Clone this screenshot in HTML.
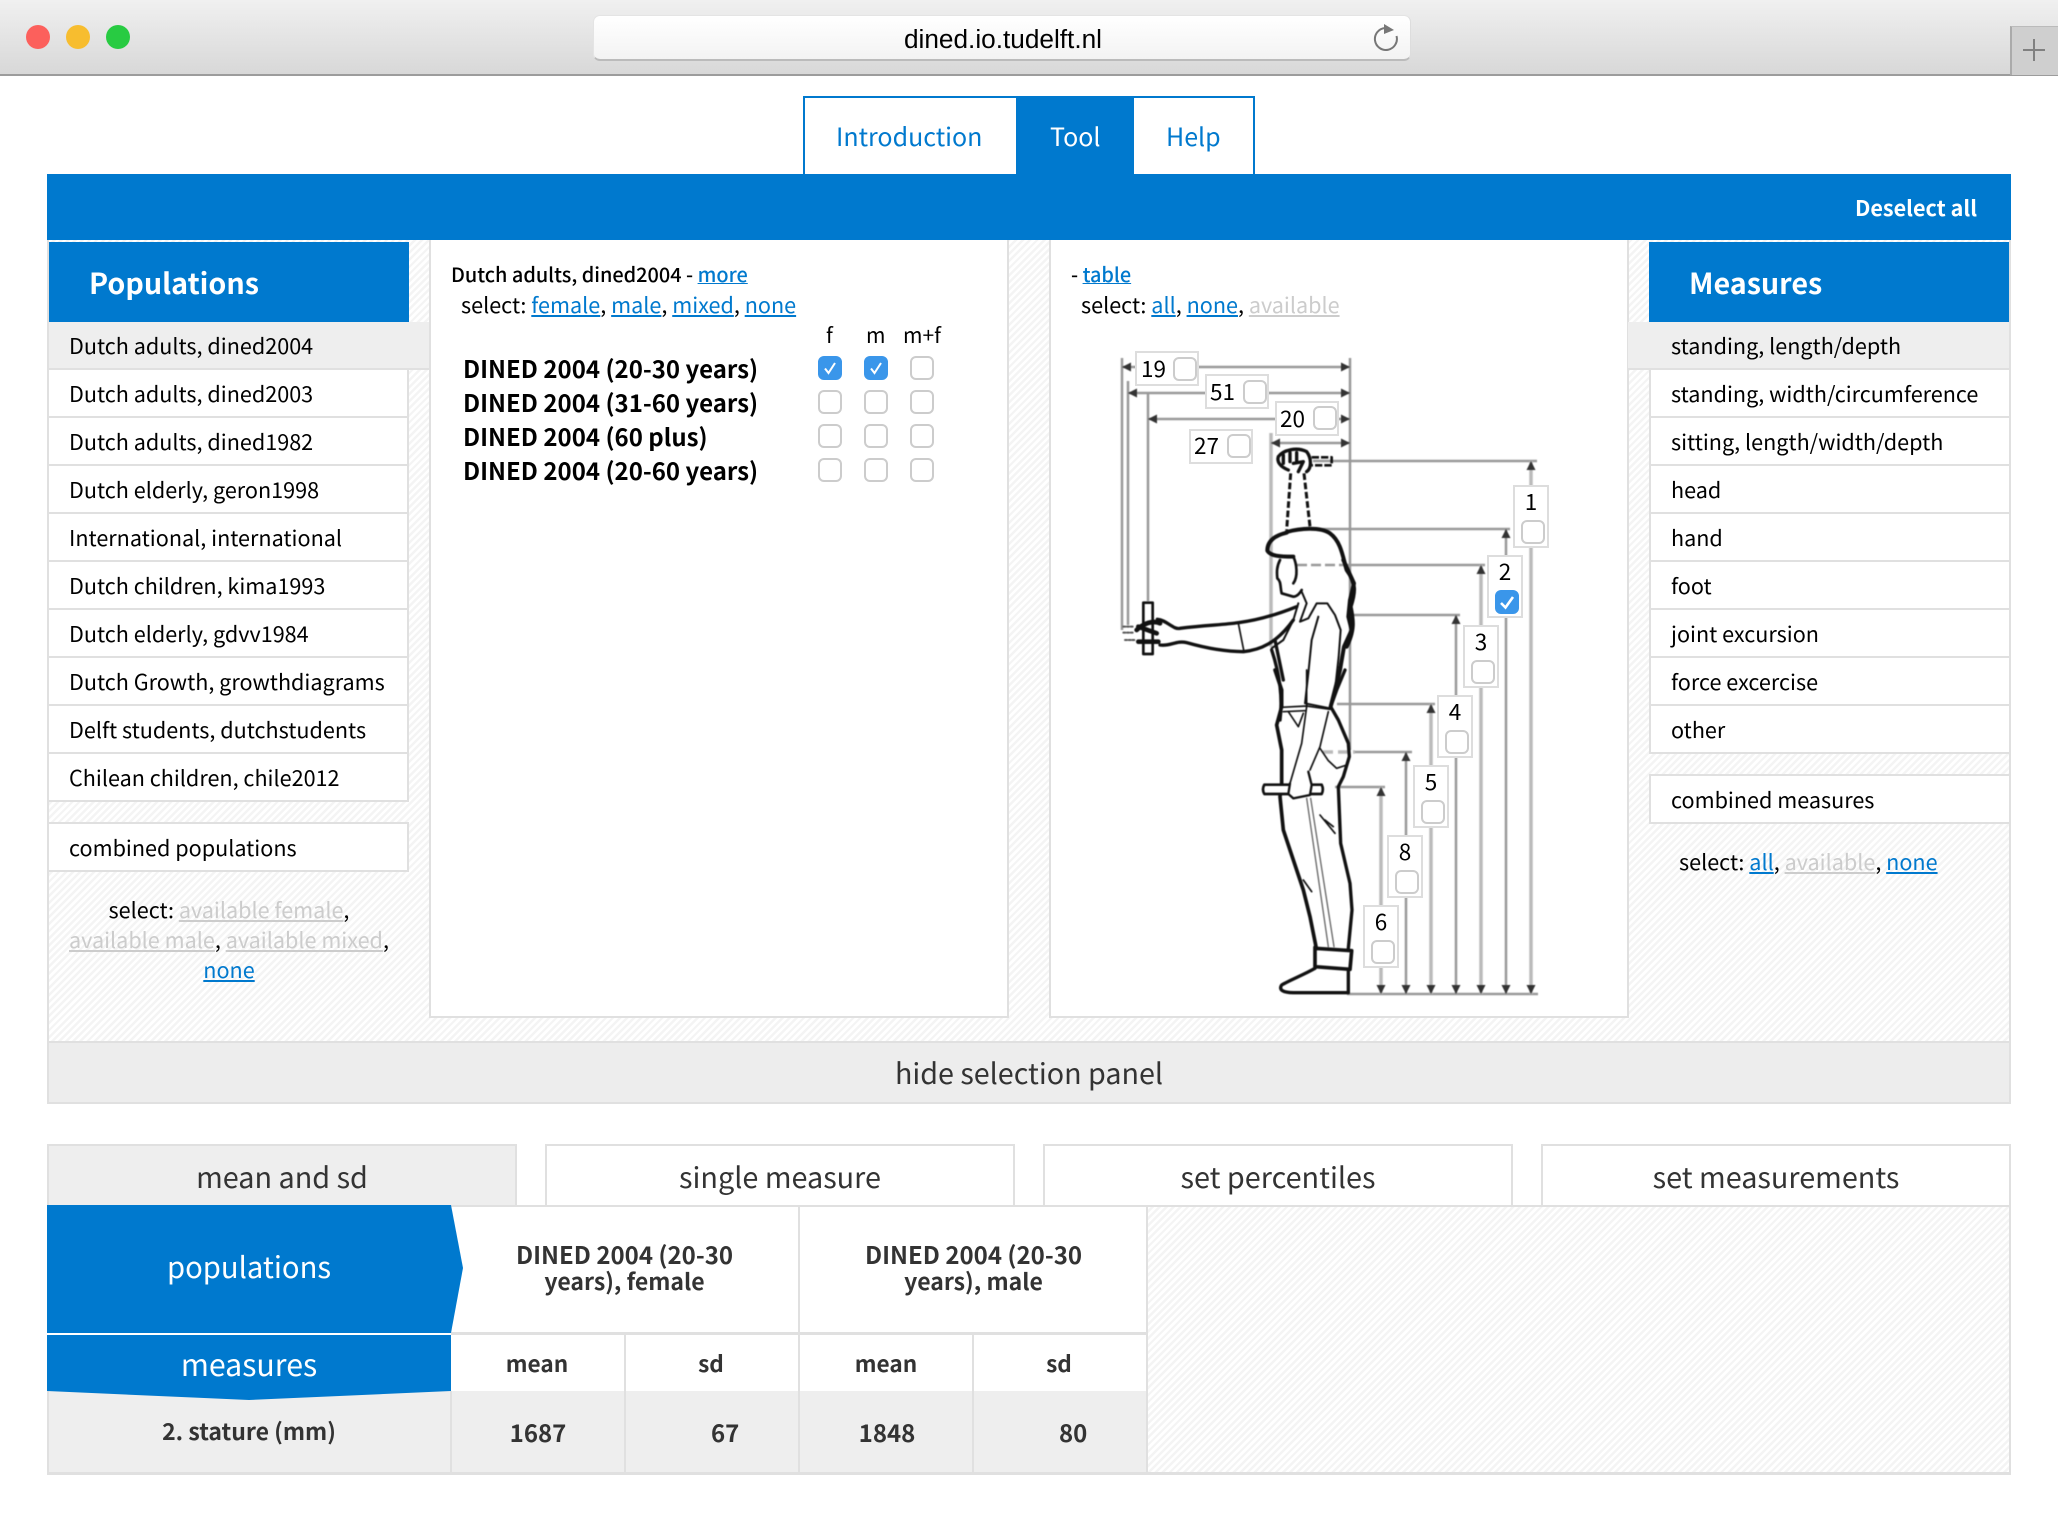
<!DOCTYPE html>
<html><head><meta charset="utf-8"><style>
*{box-sizing:border-box}
html,body{margin:0;padding:0;width:2058px;height:1524px;overflow:hidden;background:#fff}
body{position:relative;font-family:"Noto Sans CJK JP","Liberation Sans",sans-serif;color:#000}
.a,.t{position:absolute}
.t{white-space:nowrap;line-height:30px;height:30px;font-size:21.6px}
.m{margin-top:-1px}
.n{font-size:22.5px;margin-top:-1px}
.r{font-size:24px;margin-top:-1px}
.b{font-weight:700}
a{color:#0079ce;text-decoration:underline}
a.g{color:#ccc}
.hatch{background:repeating-linear-gradient(135deg,#fff 0 2.6px,#f4f4f4 2.6px 5px)}
.li{position:absolute;height:48px;background:#fff;border-bottom:2px solid #e0e0e0;border-right:2px solid #e0e0e0;border-left:2px solid #e0e0e0}
.cb{position:absolute;width:24px;height:24px;border:2px solid #ccc;border-radius:6px;background:#fff}
.cb.on{background:#3a96ea;border-color:#3a96ea}
.cb svg{position:absolute;left:-2px;top:-2px}
.lab{position:absolute;background:#fff;border:2px solid #ddd}
.tab{position:absolute;top:1144px;height:61px;border:2px solid #e0e0e0;border-bottom:none;text-align:center;font-size:28.8px;line-height:61px;color:#333;background:#fff}
.c{text-align:center}
</style></head><body>
<!-- browser chrome -->
<div class="a" style="left:0;top:0;width:2058px;height:76px;background:linear-gradient(#f0f0f0,#d8d8d8);border-bottom:2px solid #9c9c9c"></div>
<div class="a" style="left:26px;top:25px;width:24px;height:24px;border-radius:50%;background:#fc605c"></div>
<div class="a" style="left:66px;top:25px;width:24px;height:24px;border-radius:50%;background:#f7bd2f"></div>
<div class="a" style="left:106px;top:25px;width:24px;height:24px;border-radius:50%;background:#28cb42"></div>
<div class="a" style="left:593px;top:15px;width:818px;height:46px;border-radius:7px;background:linear-gradient(#fff,#f3f3f3);border-bottom:2px solid #bbb;border-top:1px solid #e4e4e4;border-left:1px solid #e4e4e4;border-right:1px solid #ddd"></div>
<div class="t c" style="left:595px;width:816px;top:24px;font:26.2px/30px 'Liberation Sans',sans-serif;height:30px">dined.io.tudelft.nl</div>
<svg class="a" style="left:1370px;top:22px" width="32" height="32" viewBox="0 0 32 32"><path d="M26.5 14A11 11 0 1 1 15 6" fill="none" stroke="#777" stroke-width="2"/><path d="M14 2L24 8L14 12Z" fill="#777"/></svg>
<div class="a" style="left:2010px;top:26px;width:48px;height:49px;background:#cfcfcf;border-left:2px solid #aaa;border-top:1px solid #bbb"></div>
<div class="a" style="left:2023px;top:49px;width:22px;height:2px;background:#808080"></div>
<div class="a" style="left:2033px;top:39px;width:2px;height:22px;background:#808080"></div>

<!-- top tabs -->
<div class="a" style="left:803px;top:96px;width:452px;height:78px;border:2px solid #0079ce;border-bottom:none"></div>
<div class="a" style="left:1016px;top:96px;width:118px;height:78px;background:#0079ce"></div>
<div class="t m" style="left:836px;top:122px;font-size:25px;color:#0079ce">Introduction</div>
<div class="t m" style="left:1050px;top:122px;font-size:25px;color:#fff">Tool</div>
<div class="t m" style="left:1166px;top:122px;font-size:25px;color:#0079ce">Help</div>
<div class="a" style="left:47px;top:174px;width:1964px;height:66px;background:#0079ce"></div>
<div class="t b" style="right:81px;top:193px;color:#fff;font-size:21.6px">Deselect all</div>

<!-- selection panel -->
<div class="a hatch" style="left:47px;top:240px;width:1964px;height:803px;border-left:2px solid #e0e0e0;border-right:2px solid #e0e0e0"></div>
<div class="a" style="left:47px;top:1041px;width:1964px;height:63px;background:#ededed;border:2px solid #e0e0e0"></div>
<div class="t c" style="left:47px;width:1964px;top:1058px;font-size:28.7px;color:#333">hide selection panel</div>

<!-- populations -->
<div class="a" style="left:49px;top:242px;width:360px;height:80px;background:#0079ce"></div>
<div class="t b" style="left:89px;top:268px;color:#fff;font-size:28.7px">Populations</div>
<div class="li" style="left:47px;top:322px;width:383px;background:#eee;border-right:none">  </div>
<div class="li" style="left:47px;top:370px;width:362px"></div>
<div class="li" style="left:47px;top:418px;width:362px"></div>
<div class="li" style="left:47px;top:466px;width:362px"></div>
<div class="li" style="left:47px;top:514px;width:362px"></div>
<div class="li" style="left:47px;top:562px;width:362px"></div>
<div class="li" style="left:47px;top:610px;width:362px"></div>
<div class="li" style="left:47px;top:658px;width:362px"></div>
<div class="li" style="left:47px;top:706px;width:362px"></div>
<div class="li" style="left:47px;top:754px;width:362px"></div>
<div class="t" style="left:69px;top:331px">Dutch adults, dined2004</div>
<div class="t" style="left:69px;top:379px">Dutch adults, dined2003</div>
<div class="t" style="left:69px;top:427px">Dutch adults, dined1982</div>
<div class="t" style="left:69px;top:475px">Dutch elderly, geron1998</div>
<div class="t" style="left:69px;top:523px">International, international</div>
<div class="t" style="left:69px;top:571px">Dutch children, kima1993</div>
<div class="t" style="left:69px;top:619px">Dutch elderly, gdvv1984</div>
<div class="t" style="left:69px;top:667px">Dutch Growth, growthdiagrams</div>
<div class="t" style="left:69px;top:715px">Delft students, dutchstudents</div>
<div class="t" style="left:69px;top:763px">Chilean children, chile2012</div>
<div class="li" style="left:47px;top:822px;width:362px;height:50px;border-top:2px solid #e0e0e0"></div>
<div class="t" style="left:69px;top:833px">combined populations</div>
<div class="t c" style="left:49px;width:360px;top:895px">select: <a class="g">available female</a>,</div>
<div class="t c" style="left:49px;width:360px;top:925px"><a class="g">available male</a>, <a class="g">available mixed</a>,</div>
<div class="t c" style="left:49px;width:360px;top:955px"><a>none</a></div>

<!-- center panel 1 -->
<div class="a" style="left:429px;top:240px;width:580px;height:778px;background:#fff;border:2px solid #e0e0e0;border-top:none"></div>
<div class="t m" style="left:451px;top:260px;font-size:19.9px;font-weight:500">Dutch adults, dined2004 - <a>more</a></div>
<div class="t" style="left:461px;top:290px">select: <a>female</a>, <a>male</a>, <a>mixed</a>, <a>none</a></div>
<div class="t" style="left:826px;top:320px;font-size:21px">f</div>
<div class="t" style="left:866px;top:320px;font-size:21px">m</div>
<div class="t" style="left:903px;top:320px;font-size:21px">m+f</div>
<div class="t b r" style="left:463px;top:354px">DINED 2004 (20-30 years)</div>
<div class="t b r" style="left:463px;top:388px">DINED 2004 (31-60 years)</div>
<div class="t b r" style="left:463px;top:422px">DINED 2004 (60 plus)</div>
<div class="t b r" style="left:463px;top:456px">DINED 2004 (20-60 years)</div>
<div class="cb on" style="left:818px;top:356px"><svg width="24" height="24"><path d="M7 12.5L10.5 17L17 7" fill="none" stroke="#fff" stroke-width="2"/></svg></div>
<div class="cb on" style="left:864px;top:356px"><svg width="24" height="24"><path d="M7 12.5L10.5 17L17 7" fill="none" stroke="#fff" stroke-width="2"/></svg></div>
<div class="cb" style="left:910px;top:356px"></div>
<div class="cb" style="left:818px;top:390px"></div><div class="cb" style="left:864px;top:390px"></div><div class="cb" style="left:910px;top:390px"></div>
<div class="cb" style="left:818px;top:424px"></div><div class="cb" style="left:864px;top:424px"></div><div class="cb" style="left:910px;top:424px"></div>
<div class="cb" style="left:818px;top:458px"></div><div class="cb" style="left:864px;top:458px"></div><div class="cb" style="left:910px;top:458px"></div>

<!-- center panel 2 -->
<div class="a" style="left:1049px;top:240px;width:580px;height:778px;background:#fff;border:2px solid #e0e0e0;border-top:none"></div>
<div class="t m" style="left:1071px;top:260px;font-size:19.9px;font-weight:500">- <a>table</a></div>
<div class="t" style="left:1081px;top:290px">select: <a>all</a>, <a>none</a>, <a class="g">available</a></div>

<!-- figure -->
<svg class="a" style="left:0;top:0;filter:blur(.6px)" width="2058" height="1524" viewBox="0 0 2058 1524">
<defs>
<marker id="m" markerUnits="userSpaceOnUse" markerWidth="11" markerHeight="11" refX="10" refY="5.5" orient="auto-start-reverse"><path d="M1 1L10 5.5L1 10Z" fill="#333"/></marker>
</defs>
<g fill="none" stroke="#999" stroke-width="2.5">
<path d="M1122 358V630M1128 381V625M1148 393V601" />
<path d="M1271 433V647" stroke="#bbb" stroke-width="3.5"/>
<path d="M1350 358V750"/>
<path d="M1122 367H1350" marker-start="url(#m)" marker-end="url(#m)"/>
<path d="M1128 393H1350" marker-start="url(#m)" marker-end="url(#m)"/>
<path d="M1148 419H1350" marker-start="url(#m)" marker-end="url(#m)"/>
<path d="M1271 443H1350" marker-start="url(#m)" marker-end="url(#m)"/>
<path d="M1313 461H1537M1320 529H1510M1350 565H1485M1350 615H1460M1337 704H1435M1355 752H1412M1335 787H1385M1347 994H1538"/>
<path d="M1297 565H1350" stroke-dasharray="10 4"/>
<path d="M1323 752H1355" stroke="#bbb" stroke-width="3.5" stroke-dasharray="10 5"/>
<path d="M1531 461V994" stroke="#bbb" stroke-width="3.5" marker-start="url(#m)" marker-end="url(#m)"/>
<path d="M1506 529V994" marker-start="url(#m)" marker-end="url(#m)"/>
<path d="M1481 565V994" stroke="#bbb" stroke-width="3.5" marker-start="url(#m)" marker-end="url(#m)"/>
<path d="M1456 615V994" marker-start="url(#m)" marker-end="url(#m)"/>
<path d="M1431 704V994" stroke="#bbb" stroke-width="3.5" marker-start="url(#m)" marker-end="url(#m)"/>
<path d="M1406 752V994" marker-start="url(#m)" marker-end="url(#m)"/>
<path d="M1381 787V994" stroke="#bbb" stroke-width="3.5" marker-start="url(#m)" marker-end="url(#m)"/>
</g>
<!-- figure top part, zoom 3 coords -->
<g transform="translate(1080 330) scale(.33333)" fill="none" stroke="#111" stroke-linejoin="round" stroke-linecap="round">
<path d="M625 420C600 410 590 395 595 380C610 360 650 350 680 365C695 385 695 415 680 425M610 375V400M630 368V395M650 368V395M640 400L670 395L655 425" stroke-width="10"/>
<path d="M695 382H755V406H695" stroke-width="8" stroke-dasharray="22 6" stroke-linecap="butt"/>
<path d="M632 430L620 600M672 430L690 590" stroke-width="9" stroke-dasharray="20 8" stroke-linecap="butt"/>
<path d="M620 606C660 595 720 590 750 610C785 635 790 690 800 720C830 760 825 790 812 830C820 870 825 900 800 950" stroke-width="12"/>
<path d="M620 608C590 615 562 630 562 662C570 678 600 680 640 680" stroke-width="12"/>
<path d="M600 690C590 710 590 725 592 745C604 755 600 770 605 790L640 800C650 800 660 790 665 780M640 680C650 700 655 740 640 760" stroke-width="8"/>
<path d="M232 868C260 870 280 900 300 895C380 885 430 885 475 878C540 870 600 850 650 830" stroke-width="10"/>
<path d="M240 945C270 950 290 930 320 938C380 955 440 965 490 965C540 960 590 940 640 870" stroke-width="10"/>
<path d="M475 880L492 965" stroke-width="5"/>
<path d="M190 818H218V972H190Z" stroke-width="8" fill="#fff"/>
<path d="M170 900C190 880 220 870 240 880M175 935H235M175 890L230 910" stroke-width="14"/>
<path d="M130 890H160M130 908H160M135 930H165" stroke-width="6" stroke-dasharray="6 5" stroke="#555"/>
<path d="M585 930L610 1050" stroke-width="10"/>
</g>
<!-- figure mid part, zoom 7 coords -->
<g transform="translate(1240 560) scale(.33333)" fill="none" stroke="#111" stroke-linejoin="round" stroke-linecap="round">
<path d="M95 270C115 330 130 400 120 480" stroke-width="10"/>
<path d="M185 95L200 130L180 185L205 175L230 130L262 130L285 165L302 210L296 290L285 390L270 440" stroke-width="6"/>
<path d="M235 170L215 240L205 340L195 430L270 445" stroke-width="6"/>
<path d="M175 130L160 180L130 240L95 265" stroke-width="6"/>
<path d="M310 0L342 70L330 120L325 170L335 210L312 260L300 330L272 440" stroke-width="12"/>
</g>
<!-- figure bottom part, zoom 4 coords -->
<g transform="translate(1080 670) scale(.33333)" fill="none" stroke="#111" stroke-linejoin="round" stroke-linecap="round">
<path d="M585 0L605 60L605 110L590 165L605 240L605 340L600 380L610 480L640 570L670 660L690 740L708 830" stroke-width="11"/>
<path d="M795 0L770 60L752 110L775 150L805 220L808 260L790 320L775 350L782 520L810 640L816 720L805 835" stroke-width="10"/>
<path d="M605 112L680 108L750 118M610 125L675 122" stroke-width="5"/>
<path d="M680 0L680 110L665 220L630 340M690 300L720 230L745 125" stroke-width="5"/>
<path d="M553 344H725Q732 358 725 372H553Q545 358 553 344Z" stroke-width="8" fill="#fff"/>
<path d="M630 340L625 372L640 385L690 375L695 345L685 305" stroke-width="7" fill="#fff"/>
<path d="M680 385L745 830M692 385L762 830" stroke-width="4" stroke="#666"/>
<path d="M720 235L745 272L770 295L800 285" stroke-width="5"/>
<path d="M625 125L655 170L670 130" stroke-width="5"/>
<path d="M720 435L765 490M735 450L760 470M670 630L695 665" stroke-width="5"/>
<path d="M705 832V890L810 898L815 842L705 835" stroke-width="11"/>
<path d="M705 895C670 915 630 930 605 945C595 960 610 968 640 968H805V905" stroke-width="10"/>
</g>
</svg>
<div class="lab" style="left:1135px;top:351px;width:64px;height:35px"></div>
<div class="lab" style="left:1205px;top:374px;width:64px;height:35px"></div>
<div class="lab" style="left:1275px;top:401px;width:64px;height:35px"></div>
<div class="lab" style="left:1189px;top:429px;width:64px;height:35px"></div>
<div class="lab" style="left:1513px;top:485px;width:36px;height:63px"></div>
<div class="lab" style="left:1487px;top:555px;width:36px;height:63px"></div>
<div class="lab" style="left:1463px;top:625px;width:36px;height:63px"></div>
<div class="lab" style="left:1437px;top:695px;width:36px;height:63px"></div>
<div class="lab" style="left:1413px;top:765px;width:36px;height:63px"></div>
<div class="lab" style="left:1387px;top:835px;width:36px;height:63px"></div>
<div class="lab" style="left:1363px;top:905px;width:36px;height:63px"></div>
<div class="t n" style="left:1141px;top:354px">19</div>
<div class="t n" style="left:1210px;top:377px">51</div>
<div class="t n" style="left:1280px;top:404px">20</div>
<div class="t n" style="left:1194px;top:431px">27</div>
<div class="t c n" style="left:1513px;width:36px;top:487px">1</div>
<div class="t c n" style="left:1487px;width:36px;top:557px">2</div>
<div class="t c n" style="left:1463px;width:36px;top:627px">3</div>
<div class="t c n" style="left:1437px;width:36px;top:697px">4</div>
<div class="t c n" style="left:1413px;width:36px;top:767px">5</div>
<div class="t c n" style="left:1387px;width:36px;top:837px">8</div>
<div class="t c n" style="left:1363px;width:36px;top:907px">6</div>
<div class="cb" style="left:1173px;top:357px"></div>
<div class="cb" style="left:1243px;top:380px"></div>
<div class="cb" style="left:1313px;top:406px"></div>
<div class="cb" style="left:1227px;top:434px"></div>
<div class="cb" style="left:1521px;top:520px"></div>
<div class="cb on" style="left:1495px;top:590px"><svg width="24" height="24"><path d="M6 13L10.5 17.5L18 7" fill="none" stroke="#fff" stroke-width="2.6"/></svg></div>
<div class="cb" style="left:1471px;top:660px"></div>
<div class="cb" style="left:1445px;top:730px"></div>
<div class="cb" style="left:1421px;top:800px"></div>
<div class="cb" style="left:1395px;top:870px"></div>
<div class="cb" style="left:1371px;top:940px"></div>

<!-- measures -->
<div class="a" style="left:1649px;top:242px;width:360px;height:80px;background:#0079ce"></div>
<div class="t b" style="left:1689px;top:268px;color:#fff;font-size:28.7px">Measures</div>
<div class="li" style="left:1628px;top:322px;width:383px;background:#eee;border-left:none"></div>
<div class="li" style="left:1649px;top:370px;width:362px"></div>
<div class="li" style="left:1649px;top:418px;width:362px"></div>
<div class="li" style="left:1649px;top:466px;width:362px"></div>
<div class="li" style="left:1649px;top:514px;width:362px"></div>
<div class="li" style="left:1649px;top:562px;width:362px"></div>
<div class="li" style="left:1649px;top:610px;width:362px"></div>
<div class="li" style="left:1649px;top:658px;width:362px"></div>
<div class="li" style="left:1649px;top:706px;width:362px"></div>
<div class="t" style="left:1671px;top:331px">standing, length/depth</div>
<div class="t" style="left:1671px;top:379px">standing, width/circumference</div>
<div class="t" style="left:1671px;top:427px">sitting, length/width/depth</div>
<div class="t" style="left:1671px;top:475px">head</div>
<div class="t" style="left:1671px;top:523px">hand</div>
<div class="t" style="left:1671px;top:571px">foot</div>
<div class="t" style="left:1671px;top:619px">joint excursion</div>
<div class="t" style="left:1671px;top:667px">force excercise</div>
<div class="t" style="left:1671px;top:715px">other</div>
<div class="li" style="left:1649px;top:774px;width:362px;height:50px;border-top:2px solid #e0e0e0"></div>
<div class="t" style="left:1671px;top:785px">combined measures</div>
<div class="t" style="left:1679px;top:847px">select: <a>all</a>, <a class="g">available</a>, <a>none</a></div>

<!-- bottom tabs -->
<div class="tab" style="left:47px;width:470px;background:#eee">mean and sd</div>
<div class="tab" style="left:545px;width:470px">single measure</div>
<div class="tab" style="left:1043px;width:470px">set percentiles</div>
<div class="tab" style="left:1541px;width:470px">set measurements</div>

<!-- table -->
<div class="a hatch" style="left:1147px;top:1205px;width:864px;height:270px;border-top:2px solid #e0e0e0;border-right:2px solid #e0e0e0;border-bottom:3px solid #e0e0e0"></div>
<div class="a" style="left:451px;top:1205px;width:697px;height:130px;background:#fff;border-top:2px solid #e0e0e0;border-bottom:3px solid #e0e0e0;border-right:2px solid #e0e0e0"></div>
<div class="a" style="left:47px;top:1391px;width:1101px;height:84px;background:#eee;border-bottom:3px solid #e0e0e0;border-left:2px solid #e0e0e0"></div>
<div class="a" style="left:450px;top:1391px;width:2px;height:82px;background:#e0e0e0"></div>
<div class="a" style="left:624px;top:1335px;width:2px;height:138px;background:#e0e0e0"></div>
<div class="a" style="left:798px;top:1205px;width:2px;height:268px;background:#e0e0e0"></div>
<div class="a" style="left:972px;top:1335px;width:2px;height:138px;background:#e0e0e0"></div>
<div class="a" style="left:1146px;top:1205px;width:2px;height:268px;background:#e0e0e0"></div>
<svg class="a" style="left:0;top:0" width="500" height="1524" viewBox="0 0 500 1524"><path d="M47 1205H451L463 1268L451 1333H47Z" fill="#0079ce"/><path d="M47 1335H451V1391L249 1400L47 1391Z" fill="#0079ce"/></svg>
<div class="t c m" style="left:47px;width:404px;top:1252px;color:#fff;font-size:29.2px">populations</div>
<div class="t c m" style="left:47px;width:404px;top:1349px;color:#fff;font-size:30.3px">measures</div>
<div class="t c b r" style="left:451px;width:347px;top:1240px;color:#333">DINED 2004 (20-30</div>
<div class="t c b m" style="left:451px;width:347px;top:1266px;color:#333;font-size:23px">years), female</div>
<div class="t c b r" style="left:800px;width:347px;top:1240px;color:#333">DINED 2004 (20-30</div>
<div class="t c b m" style="left:800px;width:347px;top:1266px;color:#333;font-size:23px">years), male</div>
<div class="t c b m" style="left:451px;width:172px;top:1349px;color:#333;font-size:22.6px">mean</div>
<div class="t c b m" style="left:625px;width:172px;top:1349px;color:#333;font-size:22.6px">sd</div>
<div class="t c b m" style="left:800px;width:172px;top:1349px;color:#333;font-size:22.6px">mean</div>
<div class="t c b m" style="left:973px;width:172px;top:1349px;color:#333;font-size:22.6px">sd</div>
<div class="t c b m" style="left:47px;width:404px;top:1416px;color:#333;font-size:23px">2. stature (mm)</div>
<div class="t c b r" style="left:451px;width:174px;top:1418px;color:#333">1687</div>
<div class="t b r" style="left:711px;top:1418px;color:#333">67</div>
<div class="t c b r" style="left:800px;width:174px;top:1418px;color:#333">1848</div>
<div class="t b r" style="left:1059px;top:1418px;color:#333">80</div>
</body></html>
